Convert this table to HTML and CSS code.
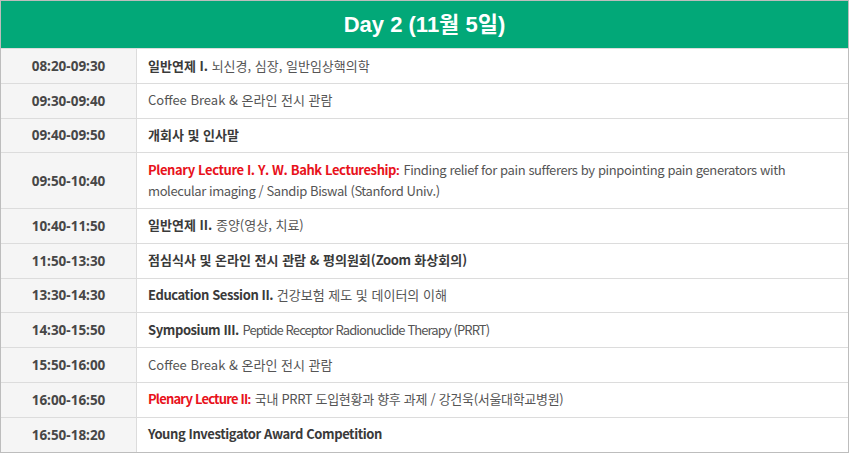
FILE: index.html
```html
<!DOCTYPE html>
<html lang="ko">
<head>
<meta charset="utf-8">
<title>Day 2</title>
<link rel="stylesheet" href="styles.css">
</head>
<body>
<div class="schedule">
  <div class="day-head">Day 2 (11월 5일)</div>
  <div class="row"><div class="time">08:20-09:30</div><div class="desc"><b>일반연제 I.</b> 뇌신경, 심장, 일반임상핵의학</div></div>
  <div class="row"><div class="time">09:30-09:40</div><div class="desc">Coffee Break &amp; 온라인 전시 관람</div></div>
  <div class="row"><div class="time">09:40-09:50</div><div class="desc"><b>개회사 및 인사말</b></div></div>
  <div class="row"><div class="time">09:50-10:40</div><div class="desc"><span class="red en">Plenary Lecture I. Y. W. Bahk Lectureship<span class="colon">:</span></span> <span class="en">Finding relief for pain sufferers by pinpointing pain generators with</span><br><span class="en">molecular imaging / Sandip Biswal (Stanford Univ.)</span></div></div>
  <div class="row"><div class="time">10:40-11:50</div><div class="desc"><b>일반연제 II.</b> 종양(영상, 치료)</div></div>
  <div class="row"><div class="time">11:50-13:30</div><div class="desc"><b>점심식사 및 온라인 전시 관람 &amp; 평의원회(<span class="en">Zoom</span> 화상회의)</b></div></div>
  <div class="row"><div class="time">13:30-14:30</div><div class="desc"><b class="en">Education Session II.</b> 건강보험 제도 및 데이터의 이해</div></div>
  <div class="row"><div class="time">14:30-15:50</div><div class="desc"><b class="en">Symposium III.</b> <span class="en tight">Peptide Receptor Radionuclide Therapy (PRRT)</span></div></div>
  <div class="row"><div class="time">15:50-16:00</div><div class="desc">Coffee Break &amp; 온라인 전시 관람</div></div>
  <div class="row"><div class="time">16:00-16:50</div><div class="desc"><span class="red en short">Plenary Lecture II<span class="colon">:</span></span> <span class="narrow">국내 <span class="en">PRRT</span> 도입현황과 향후 과제 / 강건욱(서울대학교병원)</span></div></div>
  <div class="row last"><div class="time">16:50-18:20</div><div class="desc"><b class="en">Young Investigator Award Competition</b></div></div>
</div>
</body>
</html>
```
FILE: styles.css
```css
html, body {
  margin: 0;
  padding: 0;
  background: #fff;
}
.schedule {
  width: 849px;
  box-sizing: border-box;
  border: 1px solid #bdbdbd;
  font-family: "Noto Sans CJK KR", "Noto Sans", sans-serif;
  font-size: 13px;
  color: #555;
}
.day-head {
  height: 47px;
  line-height: 48px;
  background: #02a878;
  color: #fff;
  text-align: center;
  font-family: "Liberation Sans", "Noto Sans CJK KR", sans-serif;
  font-weight: bold;
  font-size: 22px;
  border-bottom: 1px solid #dcdcdc;
}
.row {
  display: grid;
  grid-template-columns: 136px 1fr;
  border-bottom: 1px solid #dcdcdc;
}
.row.last {
  border-bottom: none;
}
.time {
  background: #f5f5f5;
  border-right: 1px solid #dcdcdc;
  display: flex;
  align-items: center;
  justify-content: center;
  font-family: "Noto Sans", sans-serif;
  font-weight: bold;
  font-size: 13.5px;
  color: #474747;
}
.desc {
  padding: 6.5px 11px;
  line-height: 20.8px;
}
.desc b {
  color: #3a3a3a;
}
.en {
  letter-spacing: -0.4px;
}
.en.tight {
  letter-spacing: -0.9px;
}
.en.short {
  letter-spacing: -0.8px;
}
.narrow {
  letter-spacing: -0.3px;
}
.red {
  color: #e8121b;
  font-weight: bold;
}
.colon {
  font-family: "Noto Sans", sans-serif;
  letter-spacing: 0;
}
```
